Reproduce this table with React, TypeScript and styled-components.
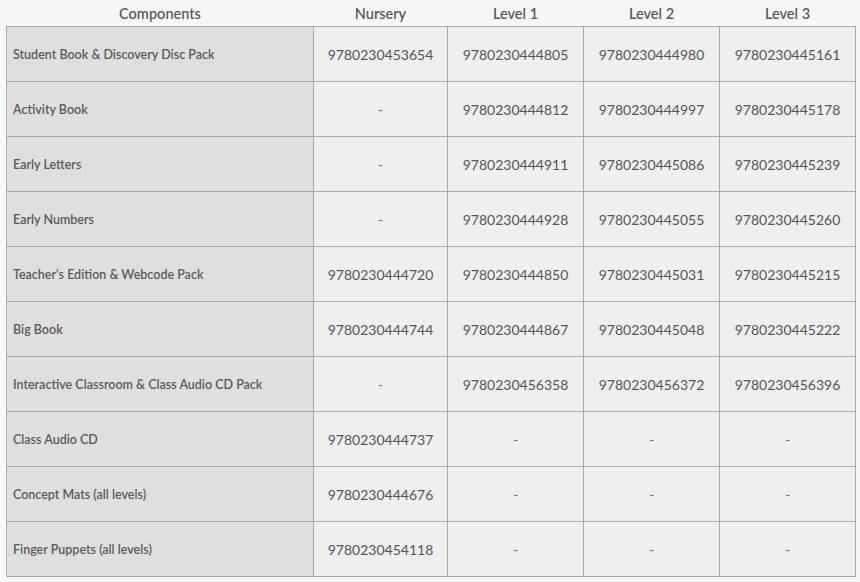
import styled, { createGlobalStyle } from 'styled-components';

const GlobalStyle = createGlobalStyle`
  html, body {
    margin: 0;
    padding: 0;
    background: #f7f7f7;
  }
  body {
    font-family: Lato, "Open Sans", sans-serif;
    color: #555;
  }
`;

const DASH = '-';

interface Row {
  name: string;
  codes: string[];
}

const rows: Row[] = [
  { name: 'Student Book & Discovery Disc Pack', codes: ['9780230453654', '9780230444805', '9780230444980', '9780230445161'] },
  { name: 'Activity Book', codes: [DASH, '9780230444812', '9780230444997', '9780230445178'] },
  { name: 'Early Letters', codes: [DASH, '9780230444911', '9780230445086', '9780230445239'] },
  { name: 'Early Numbers', codes: [DASH, '9780230444928', '9780230445055', '9780230445260'] },
  { name: "Teacher's Edition & Webcode Pack", codes: ['9780230444720', '9780230444850', '9780230445031', '9780230445215'] },
  { name: 'Big Book', codes: ['9780230444744', '9780230444867', '9780230445048', '9780230445222'] },
  { name: 'Interactive Classroom & Class Audio CD Pack', codes: [DASH, '9780230456358', '9780230456372', '9780230456396'] },
  { name: 'Class Audio CD', codes: ['9780230444737', DASH, DASH, DASH] },
  { name: 'Concept Mats (all levels)', codes: ['9780230444676', DASH, DASH, DASH] },
  { name: 'Finger Puppets (all levels)', codes: ['9780230454118', DASH, DASH, DASH] },
];

const levels = ['Nursery', 'Level 1', 'Level 2', 'Level 3'];

export default function App() {
  return (
    <Page>
      <GlobalStyle />
      <Table>
        <colgroup>
          <Col $w={307} />
          <Col $w={134} />
          <Col $w={136} />
          <Col $w={136} />
          <Col $w={136} />
        </colgroup>
        <thead>
          <tr>
            <Head>Components</Head>
            {levels.map((l) => (
              <Head key={l}>{l}</Head>
            ))}
          </tr>
        </thead>
        <tbody>
          {rows.map((r) => (
            <tr key={r.name}>
              <NameCell>{r.name}</NameCell>
              {r.codes.map((c, i) => (
                <CodeCell key={i} $empty={c === DASH}>
                  {c}
                </CodeCell>
              ))}
            </tr>
          ))}
        </tbody>
      </Table>
    </Page>
  );
}

const Page = styled.div`
  padding: 0 5px 0 6px;
`;

const Table = styled.table`
  width: 850px;
  border-collapse: collapse;
  table-layout: fixed;
`;

const Col = styled.col<{ $w: number }>`
  width: ${(p) => p.$w}px;
`;

const Head = styled.th`
  height: 26px;
  padding: 0;
  font-size: 14.5px;
  font-weight: 600;
  color: #5c5c5c;
  text-align: center;
  vertical-align: middle;
`;

const NameCell = styled.td`
  height: 54px;
  padding: 0 6px;
  background: #dfdfdf;
  border: 1px solid #ababab;
  font-size: 12.5px;
  font-weight: 600;
  color: #5a5a5a;
  vertical-align: middle;
`;

const CodeCell = styled.td<{ $empty?: boolean }>`
  height: 54px;
  padding: 0;
  background: #efefef;
  border: 1px solid #ababab;
  font-size: 14px;
  color: ${(p) => (p.$empty ? '#777' : '#555')};
  text-align: center;
  vertical-align: middle;
`;
